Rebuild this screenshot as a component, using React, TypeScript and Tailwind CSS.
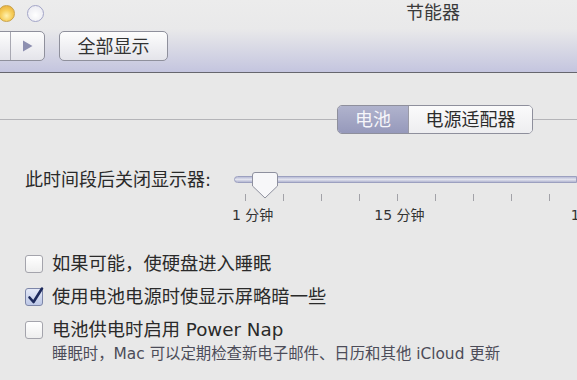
const ticks = [0, 1, 2, 3, 4, 5, 6, 7, 8];

const CheckRow = ({ label, checked }: { label: string; checked?: boolean }) => (
  <div className="flex h-[33px] items-center pl-[25px]">
    {checked ? (
      <div className="relative h-[18px] w-[18px] rounded-[3px] border border-[#7d86a8] bg-[linear-gradient(to_bottom,#e4e9f7,#bcc7e6)]">
        <svg className="absolute -top-[3px] left-[1px]" width="18" height="20" viewBox="0 0 18 20">
          <path d="M2.5 11.5 L6.5 16 L15 2.5" fill="none" stroke="#1d2a5c" strokeWidth="2.6" strokeLinecap="round" strokeLinejoin="round" />
        </svg>
      </div>
    ) : (
      <div className="h-[18px] w-[18px] rounded-[3px] border border-[#a4a4ac] bg-[linear-gradient(to_bottom,#ffffff,#eeeeee)]" />
    )}
    <span className="ml-[9px] text-[18.3px] leading-[22px]">{label}</span>
  </div>
);

const App = () => {
  return (
    <div className="h-[380px] w-[577px] overflow-hidden bg-[#e8e8e8] font-['DejaVu_Sans','Noto_Sans_CJK_SC',sans-serif] text-[#2a2a2a]">
      {/* toolbar */}
      <div className="h-[73px] border-b border-[#66666e] bg-[linear-gradient(to_bottom,#ececec_0%,#e9e9ea_40%,#c4c5df_100%)]">
        <div className="flex h-[26px] items-center">
          <div className="-ml-[2px] mt-[1px] h-[17px] w-[17px] rounded-full border border-[#c9a24a] bg-[radial-gradient(circle_at_50%_65%,#fff1b0_0%,#f7cf5c_45%,#e3a531_100%)]" />
          <div className="ml-[12px] mt-[1px] h-[17px] w-[17px] rounded-full border-[1.5px] border-[#a3a5c8] bg-[radial-gradient(circle_at_50%_60%,#ffffff_0%,#e6e6ee_100%)]" />
          <span className="ml-[362px] text-[18px] leading-[22px] text-[#3a3a3a]">节能器</span>
        </div>
        <div className="mt-[5px] flex h-[30px]">
          <div className="-ml-[25px] flex h-[30px] w-[70px] rounded-[5px] border border-[#8f909c] bg-[linear-gradient(to_bottom,#fdfdfd,#e4e4ea)]">
            <div className="w-[35px] border-r border-[#a8a8b2]" />
            <div className="flex flex-1 items-center justify-center">
              <svg width="11" height="12" viewBox="0 0 11 12">
                <path d="M1 0.5 L10.5 6 L1 11.5 Z" fill="#8d8fb0" />
              </svg>
            </div>
          </div>
          <div className="ml-[14px] flex h-[30px] w-[109px] items-center justify-center rounded-[5px] border border-[#8f909c] bg-[linear-gradient(to_bottom,#fdfdfd,#e4e4ea)] text-[18px] text-[#333]">
            全部显示
          </div>
        </div>
      </div>

      {/* tabs */}
      <div className="mt-[32px] flex h-[29px] items-center">
        <div className="h-px w-[337px] bg-[#b4b4b8]" />
        <div className="flex h-[29px] w-[196px] overflow-hidden rounded-[5px] border border-[#8e8f9c]">
          <div className="flex w-[70px] items-center justify-center bg-[linear-gradient(to_bottom,#b0b3cd,#9699bb)] text-[18px] text-[#f6f6fa]">
            电池
          </div>
          <div className="flex flex-1 items-center justify-center border-l border-[#9a9aa6] bg-[linear-gradient(to_bottom,#fbfbfb,#ededf0)] text-[18px] text-[#2c2c2c]">
            电源适配器
          </div>
        </div>
        <div className="h-px flex-1 bg-[#b4b4b8]" />
      </div>

      {/* slider */}
      <div className="mt-[36px] flex h-[20px] items-center">
        <div className="w-[234px] flex-none pl-[25px] text-[18px] leading-[20px]">此时间段后关闭显示器:</div>
        <div className="relative h-[20px] flex-1">
          <div className="mt-[6px] h-[7px] rounded-l-full border border-[#9ca0c0] bg-[linear-gradient(to_bottom,#b9bcd6,#e2e3ee,#b4b7d2)]" />
          <svg className="absolute left-[18px] top-[2px]" width="26" height="27" viewBox="0 0 26 27">
            <path d="M3 0.5 H23 Q25.5 0.5 25.5 3 V14 L13 26 L0.5 14 V3 Q0.5 0.5 3 0.5 Z" fill="#f7f7f9" stroke="#8e909e" strokeWidth="1" />
          </svg>
        </div>
      </div>
      <div className="mt-[4px] flex h-[7px] pl-[245px]">
        {ticks.map((t) => (
          <div key={t} className="w-[38px] flex-none">
            <div className="h-[7px] w-px bg-[#a2a2a8]" />
          </div>
        ))}
      </div>
      <div className="mt-[6px] flex h-[16px] text-[14px] leading-[16px] text-[#333]">
        <span className="ml-[232px] whitespace-nowrap">1 分钟</span>
        <span className="ml-[101px] whitespace-nowrap">15 分钟</span>
        <span className="ml-[146px] whitespace-nowrap">1 小时</span>
      </div>

      {/* options */}
      <div className="mt-[24px]">
        <CheckRow label="如果可能，使硬盘进入睡眠" />
        <CheckRow label="使用电池电源时使显示屏略暗一些" checked />
        <CheckRow label="电池供电时启用 Power Nap" />
        <div className="whitespace-nowrap pl-[52px] text-[15.4px] leading-[16px] text-[#4c4c58]">
          睡眠时，Mac 可以定期检查新电子邮件、日历和其他 iCloud 更新
        </div>
      </div>
    </div>
  );
};

export default App;
